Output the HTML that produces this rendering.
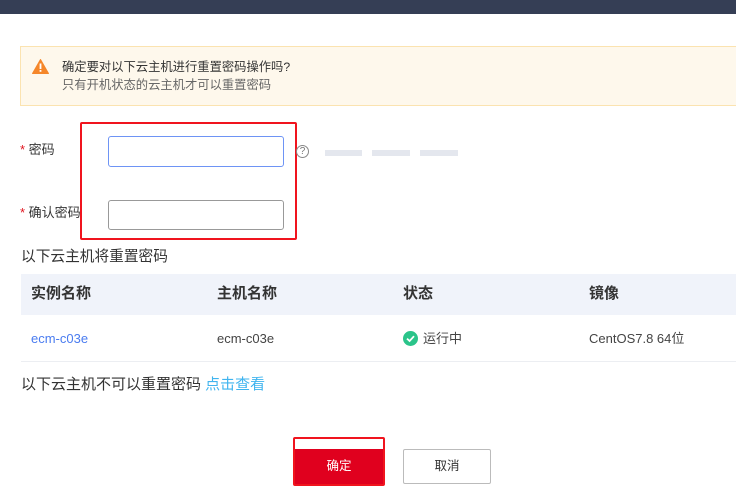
<!DOCTYPE html>
<html><head><meta charset="utf-8"><style>
*{margin:0;padding:0;box-sizing:border-box}
body{width:736px;height:499px;background:#fff;position:relative;overflow:hidden;font-family:"Liberation Sans","Noto Sans CJK SC",sans-serif;color:#333}
.a{position:absolute}
</style></head><body>
<div class="a" style="left:0;top:0;width:736px;height:14px;background:#353e55"></div>
<div class="a" style="left:20px;top:46px;width:730px;height:60px;background:#fef8ec;border:1px solid #fbe3b0"></div>
<svg class="a" style="left:32px;top:59px" width="17" height="15" viewBox="0 0 17 15"><path d="M8.5 0.5 L16.5 14.5 L0.5 14.5 Z" fill="#f5872a" stroke="#f5872a" stroke-linejoin="round"/><rect x="7.6" y="4.5" width="1.8" height="5.5" fill="#fff"/><rect x="7.6" y="11" width="1.8" height="1.8" fill="#fff"/></svg>
<div class="a" style="left:62px;top:58px;font-size:12.3px;line-height:18px;color:#333">确定要对以下云主机进行重置密码操作吗?</div>
<div class="a" style="left:62px;top:76px;font-size:12.3px;line-height:18px;color:#666">只有开机状态的云主机才可以重置密码</div>
<div class="a" style="left:80px;top:122px;width:217px;height:118px;border:2px solid #f0141e;border-radius:2px"></div>
<div class="a" style="left:108px;top:136px;width:176px;height:31px;border:1px solid #6e94f5;border-radius:3px"></div>
<div class="a" style="left:108px;top:200px;width:176px;height:30px;border:1px solid #999;border-radius:3px"></div>
<div class="a" style="left:20px;top:141px;font-size:13px;line-height:18px"><span style="color:#e0141e">*</span> 密码</div>
<div class="a" style="left:20px;top:204px;font-size:13px;line-height:18px"><span style="color:#e0141e">*</span> 确认密码</div>
<div class="a" style="left:296px;top:145px;width:13px;height:13px;border:1px solid #888;border-radius:50%;font-size:10px;line-height:11px;text-align:center;color:#777">?</div>
<div class="a" style="left:325px;top:150px;width:37px;height:6px;background:#e4e7ee"></div>
<div class="a" style="left:372px;top:150px;width:38px;height:6px;background:#e4e7ee"></div>
<div class="a" style="left:420px;top:150px;width:38px;height:6px;background:#e4e7ee"></div>
<div class="a" style="left:21px;top:247px;font-size:14.7px;line-height:20px;color:#333">以下云主机将重置密码</div>
<div class="a" style="left:21px;top:274px;width:720px;height:41px;background:#f0f3fa"></div>
<div class="a" style="left:31px;top:284px;font-size:15px;line-height:20px;font-weight:bold;color:#333">实例名称</div>
<div class="a" style="left:217px;top:284px;font-size:15px;line-height:20px;font-weight:bold;color:#333">主机名称</div>
<div class="a" style="left:403px;top:284px;font-size:15px;line-height:20px;font-weight:bold;color:#333">状态</div>
<div class="a" style="left:589px;top:284px;font-size:15px;line-height:20px;font-weight:bold;color:#333">镜像</div>
<div class="a" style="left:31px;top:330px;font-size:13px;line-height:18px;color:#4a7cf0">ecm-c03e</div>
<div class="a" style="left:217px;top:330px;font-size:13px;line-height:18px;color:#444">ecm-c03e</div>
<svg class="a" style="left:403px;top:331px" width="15" height="15" viewBox="0 0 15 15"><circle cx="7.5" cy="7.5" r="7.5" fill="#2bc48a"/><path d="M4 7.6 L6.6 10 L11 5.2" stroke="#fff" stroke-width="1.8" fill="none"/></svg>
<div class="a" style="left:423px;top:330px;font-size:13px;line-height:18px;color:#444">运行中</div>
<div class="a" style="left:589px;top:330px;font-size:13px;line-height:18px;color:#444">CentOS7.8 64位</div>
<div class="a" style="left:21px;top:361px;width:720px;height:1px;background:#eceef2"></div>
<div class="a" style="left:21px;top:375px;font-size:15px;line-height:20px;color:#333">以下云主机不可以重置密码 <span style="color:#3fb4ef">点击查看</span></div>
<div class="a" style="left:293px;top:437px;width:92px;height:49px;border:2px solid #f0141e;border-radius:2px"></div>
<div class="a" style="left:295px;top:449px;width:88px;height:35px;background:#e0001e;color:#fff;font-size:12.5px;line-height:35px;text-align:center">确定</div>
<div class="a" style="left:403px;top:449px;width:88px;height:35px;border:1px solid #bbb;border-radius:2px;color:#333;font-size:12.5px;line-height:33px;text-align:center">取消</div>
</body></html>
